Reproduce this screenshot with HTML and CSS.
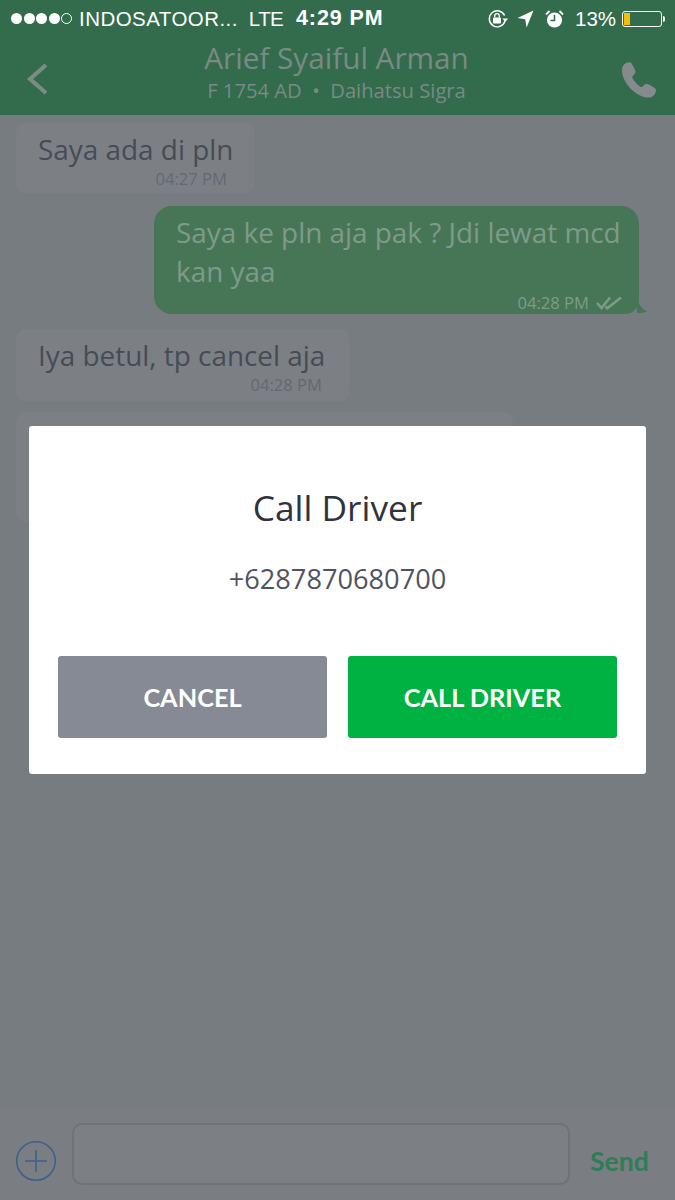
FILE: index.html
```html
<!DOCTYPE html>
<html lang="id">
<head>
<meta charset="utf-8">
<title>Chat</title>
<link rel="stylesheet" href="styles.css">
</head>
<body>
<div class="app">
  <header class="top">
    <div class="status">
      <div class="status-left">
        <span class="signal"><i class="dot"></i><i class="dot"></i><i class="dot"></i><i class="dot"></i><i class="dot empty"></i></span>
        <span class="carrier">INDOSATOOR...</span>
        <span class="net">LTE</span>
      </div>
      <span class="clock">4:29 PM</span>
      <div class="status-right">
        <svg class="ic-lock" width="22" height="20" viewBox="0 0 22 20"><path d="M17.6 6.5A8 8 0 1 0 18 12" fill="none" stroke="#fff" stroke-width="1.4"/><path d="M15.5 9.5h5.5l-2.7 3.4z" fill="#fff"/><rect x="6" y="8.5" width="8" height="6" rx="1" fill="#fff"/><path d="M7.7 8.5V7a2.3 2.3 0 0 1 4.6 0v1.5" fill="none" stroke="#fff" stroke-width="1.3"/></svg>
        <svg class="ic-loc" width="17" height="18" viewBox="0 0 17 18"><path d="M16.5.5 9.6 17.5l-1.4-8.3L.5 8z" fill="#fff"/></svg>
        <svg class="ic-alarm" width="19" height="20" viewBox="0 0 19 20"><circle cx="9.5" cy="11" r="7.6" fill="#fff"/><path d="M9.5 6v5.4H5.4" fill="none" stroke="#336b4d" stroke-width="1.5"/><path d="M1 5.5 4.5 2M18 5.5 14.5 2" stroke="#fff" stroke-width="1.8" fill="none"/></svg>
        <span class="pct">13%</span>
        <span class="battery"><span class="battery-level"></span></span><span class="battery-cap"></span>
      </div>
    </div>
    <nav class="nav">
      <svg class="back" width="24" height="34" viewBox="0 0 24 34"><path d="M21 3 5 17l16 14" fill="none" stroke="#7d8a85" stroke-width="4.2"/></svg>
      <div class="driver">
        <div class="driver-name">Arief Syaiful Arman</div>
        <div class="driver-car">F 1754 AD &nbsp;•&nbsp; Daihatsu Sigra</div>
      </div>
      <svg class="phone" width="38" height="38" viewBox="0 0 38 38"><path d="M3 3.5C5 1.500 8 .8 9.500 1.500c1.500.7 4.500 7 5 9 .4 1.700-1.800 3.300-2.800 4.500-.6.800-.5 1.500 0 2.500 1.800 3.300 4 5.700 7.300 8 1 .7 1.800.7 2.600 0 1.300-1 3-3 4.500-2.600 2.400.6 7.800 3.600 8.600 5 .8 1.500-.2 5-2.500 7-2.600 2.200-7 2.300-12 .2C11.500 31 5 24 2 15.500.5 11 .7 6 3 3.500z" fill="#858b8c"/></svg>
    </nav>
  </header>

  <main class="chat">
    <div class="bubble in first">
      <p class="msg">Saya ada di pln</p>
      <div class="meta">04:27 PM</div>
    </div>
    <div class="bubble out">
      <p class="msg">Saya ke pln aja pak ? Jdi lewat mcd kan yaa</p>
      <div class="meta">04:28 PM
        <svg class="ticks" width="26" height="14" viewBox="0 0 26 14"><path d="M1 7l4.500 5L14 1.500M9.500 10.500l1.800 1.700L25 1.500" fill="none" stroke="#7e9b8a" stroke-width="2.600"/></svg>
      </div>
      <svg class="tail" width="12" height="14" viewBox="0 0 12 14"><path d="M0 0c2 4 5 9 10 11.500-3 1-7 1.500-10 1.500z" fill="#477657"/></svg>
    </div>
    <div class="bubble in third">
      <p class="msg">Iya betul, tp cancel aja</p>
      <div class="meta">04:28 PM</div>
    </div>
    <div class="bubble in hidden-msg"></div>
  </main>

  <footer class="composer">
    <svg class="plus" width="42" height="42" viewBox="0 0 42 42"><circle cx="21" cy="21" r="19.300" fill="none" stroke="#3d5f8f" stroke-width="1.500"/><path d="M21 10v22M10 21h22" stroke="#3d5f8f" stroke-width="1.500"/></svg>
    <div class="input"></div>
    <span class="send">Send</span>
  </footer>

  <div class="modal">
    <h1 class="modal-title">Call Driver</h1>
    <p class="modal-phone">+6287870680700</p>
    <div class="actions">
      <div class="btn grey">CANCEL</div>
      <div class="btn green">CALL DRIVER</div>
    </div>
  </div>
</div>
</body>
</html>
```

FILE: styles.css
```css
* { box-sizing: border-box; }
html, body { margin: 0; padding: 0; }
body { width: 675px; height: 1200px; overflow: hidden; background: #777c80; font-family: "Open Sans", "Noto Sans", sans-serif; }
.app { position: relative; width: 675px; height: 1200px; display: flex; flex-direction: column; }

.top { height: 115px; background: #336b4d; flex: none; }
.status { height: 37px; padding: 0 0 0 11px; display: flex; align-items: center; color: #fff; font-family: "Liberation Sans", sans-serif; font-size: 20.500px; position: relative; }
.status-left { display: flex; align-items: center; width: 285px; flex: none; }
.signal { display: flex; gap: 1.500px; margin-right: 7px; }
.dot { width: 11px; height: 11px; border-radius: 50%; background: #fff; display: block; }
.dot.empty { background: none; border: 1px solid #fff; }
.carrier { margin-right: 11px; letter-spacing: .45px; }
.net { letter-spacing: -.6px; }
.clock { font-size: 21.500px; font-weight: 700; letter-spacing: .9px; width: 191px; flex: none; }
.status-right { display: flex; align-items: center; }
.ic-lock { margin-right: 8px; }
.ic-loc { margin-right: 11px; }
.ic-alarm { margin-right: 11px; }
.pct { margin-right: 6px; }
.battery { width: 40px; height: 16px; border: 1px solid #fff; border-radius: 3px; padding: 1px; display: block; }
.battery-level { display: block; width: 6px; height: 100%; background: #f5bd09; }
.battery-cap { width: 2px; height: 6px; background: #fff; border-radius: 0 2px 2px 0; margin-left: 1px; }

.nav { height: 78px; padding: 0 16px 0 25px; display: flex; align-items: flex-start; justify-content: space-between; }
.back { margin-top: 25px; }
.driver { text-align: center; color: #7a8a84; margin-top: 1px; padding-left: 3px; }
.driver-name { font-size: 29.700px; line-height: 40px; white-space: nowrap; }
.driver-car { font-size: 20.200px; line-height: 24px; white-space: nowrap; }
.phone { margin-top: 24px; }

.chat { flex: 1; padding: 8px 36px 0 16px; display: flex; flex-direction: column; align-items: flex-start; }
.bubble { position: relative; border-radius: 10px; background: #7c8085; color: #474b56; }
.msg { margin: 0; font-size: 27.900px; line-height: 39px; }
.meta { font-size: 16.600px; line-height: 20px; text-align: right; color: #636874; }
.first { width: 239px; height: 70px; padding: 7px 8px 0 22px; }
.first .meta, .third .meta { margin-right: 20px; }
.out { align-self: flex-end; width: 485px; height: 108px; margin-top: 13px; padding: 7px 10px 0 22px; background: #477657; color: #7e9b8a; border-radius: 18px 18px 14px 18px; }
.out .msg { line-height: 39px; }
.out .meta { color: #7e9b8a; display: flex; justify-content: flex-end; align-items: center; gap: 7px; margin: 2px 7px 0 0; }
.tail { position: absolute; right: -10px; bottom: 0; }
.third { width: 334px; height: 72px; margin-top: 15px; padding: 7px 8px 0 22px; }
.hidden-msg { width: 497px; height: 110px; margin-top: 11px; }

.composer { height: 93px; flex: none; background: #7a7e83; border-top: 1px solid #777c80; padding: 15px 26px 15px 15px; display: flex; align-items: center; }
.plus { flex: none; margin-top: 13px; }
.input { width: 498px; height: 62px; margin-left: 15px; border: 2px solid #6e727a; border-radius: 10px; background: #7c8085; }
.send { margin-left: 20px; margin-top: 13px; font-family: "Lato", sans-serif; font-weight: 700; font-size: 26.600px; color: #2f7d57; }

.modal { position: absolute; left: 29px; top: 426px; width: 617px; height: 348px; background: #fff; border-radius: 3px; padding: 0 29px; text-align: center; display: flex; flex-direction: column; }
.modal-title { margin: 59px 0 0; font-weight: 400; font-size: 35.300px; line-height: 45px; color: #30333f; }
.modal-phone { margin: 31px 0 0; font-size: 27.200px; line-height: 36px; color: #50535f; }
.actions { display: flex; justify-content: space-between; margin-top: 59px; }
.btn { width: 269px; height: 82px; border-radius: 3px; color: #fff; font-family: "Lato", sans-serif; font-weight: 700; font-size: 25.300px; display: flex; align-items: center; justify-content: center; }
.grey { background: #868a95; }
.green { background: #00b241; }
```
